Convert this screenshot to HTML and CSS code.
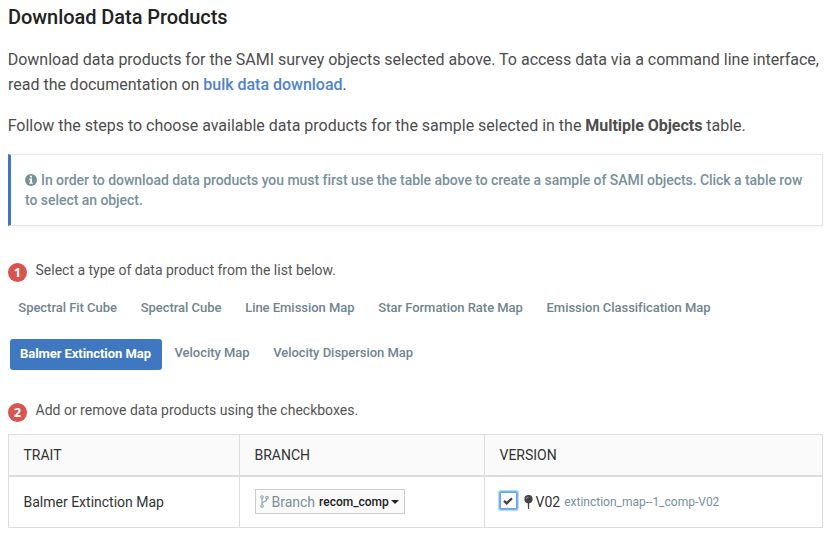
FILE: index.html
```html
<!DOCTYPE html>
<html lang="en">
<head>
<meta charset="utf-8">
<title>Download Data Products</title>
<link rel="stylesheet" href="styles.css">
</head>
<body>
<main>
  <h1>Download Data Products</h1>
  <p class="lead">Download data products for the SAMI survey objects selected above. To access data via a command line interface,<br>read the documentation on <a href="#">bulk data download</a>.</p>
  <p class="lead">Follow the steps to choose available data products for the sample selected in the <strong>Multiple Objects</strong> table.</p>
  <div class="callout"><svg class="info" viewBox="0 0 12 12"><circle cx="6" cy="6" r="6"/><path d="M5 1.700h2v1.700H5zM4.200 4.600H7v3.900h.9v1.300H4.200V8.500H5V5.900h-.8z"/></svg><span class="callout-text">In order to download data products you must first use the table above to create a sample of SAMI objects. Click a table row</span><br><span class="callout-end">to select an object.</span></div>
  <div class="step"><span class="badge">1</span><span>Select a type of data product from the list below.</span></div>
  <nav>
    <div class="tabs first">
      <a>Spectral Fit Cube</a><a>Spectral Cube</a><a>Line Emission Map</a><a>Star Formation Rate Map</a><a>Emission Classification Map</a>
    </div>
    <div class="tabs">
      <a class="active">Balmer Extinction Map</a><a>Velocity Map</a><a>Velocity Dispersion Map</a>
    </div>
  </nav>
  <div class="step step-two"><span class="badge">2</span><span>Add or remove data products using the checkboxes.</span></div>
  <div class="table">
    <div class="row head"><div>TRAIT</div><div>BRANCH</div><div>VERSION</div></div>
    <div class="row body"><div>Balmer Extinction Map</div>
      <div><button class="branch"><svg class="fork" viewBox="0 0 9 13"><path d="M2 3v7M7 3.500C7 7.500 2 5.500 2 9.500"/><circle cx="2" cy="2" r="1.300"/><circle cx="7" cy="2.700" r="1.300"/><circle cx="2" cy="11" r="1.300"/></svg><span class="branch-label">Branch</span><span class="branch-name">recom_comp</span><i class="caret"></i></button></div>
      <div><span class="check"><svg viewBox="0 0 10 8"><path d="M1 3.900l2.700 2.500L9 1.200"/></svg></span><svg class="pin" viewBox="0 0 9 14"><circle cx="4.500" cy="4.200" r="4.100"/><path d="M3.700 8h1.600l-.3 6h-1z"/><path class="shine" d="M2.300 4.100Q2.400 2.200 4.400 2"/></svg><span class="version">V02</span><span class="file">extinction_map--1_comp-V02</span></div>
    </div>
  </div>
</main>
</body>
</html>
```
FILE: styles.css
```css
* { box-sizing: border-box; }
body { margin: 0; background: #fff; color: #4d4d4d; font-family: Roboto, sans-serif; white-space: nowrap; }
main { width: 815px; margin-left: 8px; padding-top: 3px; }
h1 { margin: 0; font-size: 20px; line-height: 28px; font-weight: 500; letter-spacing: -.06px; color: #222; }
.lead { margin: 16px 0 0; font-size: 16px; line-height: 25px; letter-spacing: -.01px; text-indent: -.3px; }
.lead a { color: #4f83cc; font-weight: 500; letter-spacing: -.02px; text-decoration: none; }
.lead strong { font-weight: 700; letter-spacing: -.03px; }
.callout { height: 72px; margin-top: 16px; padding: 15px 14px; border: 1px solid #e6e6e6; border-left: 3px solid #3f78c1; font-size: 14px; line-height: 20px; font-weight: 500; letter-spacing: -.045px; color: #78909c; box-shadow: 0 1px 2px rgba(0,0,0,.05); }
.info { width: 12px; height: 12px; fill: #78909c; vertical-align: -1px; margin-right: 4px; }
.info path { fill: #fff; }
.step { display: flex; align-items: flex-start; gap: 8.500px; height: 24px; margin-top: 34px; font-size: 14px; line-height: 20px; color: #555; }
.badge { width: 19px; height: 19px; margin-top: 3px; border-radius: 50%; background: #d9534f; color: #fff; font: bold 13px/18px "Open Sans", sans-serif; text-align: center; }
nav { margin-top: 9px; }
.tabs { display: flex; align-items: flex-start; gap: 3.500px; height: 45px; padding: 0 2px; font-size: 13px; font-weight: 500; line-height: 20px; letter-spacing: -.03px; color: #6f858f; }
.tabs.first { gap: 3.700px; padding-left: .3px; }
.tabs a { padding: 5px 10px; height: 31px; }
.tabs .active { width: 152px; margin-right: -1px; margin-top: 1px; border-radius: 3px; background: #3f78c1; color: #fff; font-weight: 700; letter-spacing: -.06px; }
.step-two { margin-top: 17px; }
.table { margin-top: 10px; border: 1px solid #ddd; color: #333; font-size: 14px; }
.row { display: grid; grid-template-columns: 230px 245px 1fr; }
.row > div { display: flex; align-items: center; padding-left: 14.500px; }
.row > div + div { border-left: 1px solid #ddd; padding-left: 14.500px; }
.head { height: 42px; background: #fafafa; border-bottom: 2px solid #ddd; }
.body { height: 50px; }
.branch { display: flex; align-items: center; width: 150px; height: 25px; margin-top: -1px; padding: 0 0 0 4px; border: 1px solid #ccc; background: #fafafa; font-family: inherit; color: #333; }
.fork { flex: none; width: 9px; height: 13px; margin-right: 3px; fill: none; stroke: #90a4ae; stroke-width: 1.100; }
.branch-label { font-size: 14px; color: #78909c; margin-right: 4px; }
.branch-name { font-size: 12px; font-weight: 500; color: #222; }
.caret { margin-left: 2px; border: 4px solid transparent; border-top-color: #222; border-bottom: 0; }
.check { display: flex; align-items: center; justify-content: center; width: 17px; height: 17px; margin: -3px 7px 0 0; border: 1px solid #65a5ef; border-radius: 1px; background: #fff; box-shadow: 0 0 0 1px #7ab3f3, 0 0 1px 2px #b2d5fa; }
.check svg { width: 10px; height: 8px; fill: none; stroke: #444; stroke-width: 2.300; }
.pin { width: 9px; height: 14px; fill: #444; margin-right: 3px; }
.pin .shine { fill: none; stroke: #bbb; stroke-width: .7; }
.version { margin-right: 4px; }
.file { font-size: 12px; color: #78909c; }
```
